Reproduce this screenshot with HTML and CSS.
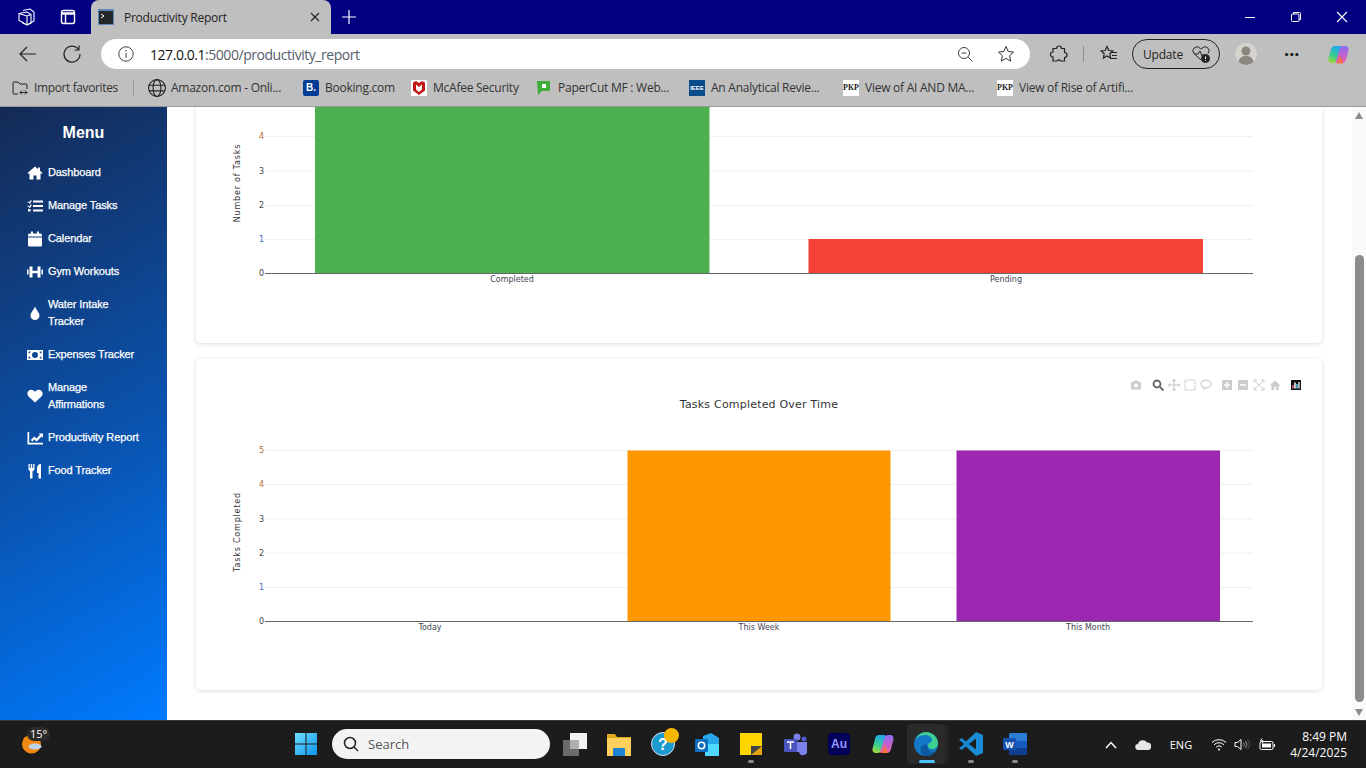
FILE: index.html
```html
<!DOCTYPE html>
<html lang="en">
<head>
  <meta charset="UTF-8">
  <meta name="viewport" content="width=device-width, initial-scale=1.0">
  <title>Productivity Report</title>
  <link rel="stylesheet" href="styles.css">
</head>
<body>
  <!-- browser tab strip -->
  <div class="tabstrip">
    <div class="strip-btns">
      <svg class="ico20" viewBox="0 0 20 20" fill="none" stroke="#fff" stroke-width="1.1"><path d="M7 3.5 14 2l4 3v9l-7 4-5-2.5"/><path d="M3 6.5 11 5l4 2.6v8.6L11 18 3 13.5z"/><path d="M11 9v9M3 6.5 11 9l4-1.4"/></svg>
      <svg class="ico20" viewBox="0 0 20 20" fill="none" stroke="#fff" stroke-width="1.4"><rect x="3.5" y="3.5" width="13" height="13" rx="2"/><path d="M3.5 6.5h13" stroke-width="2.5"/><path d="M7.5 6.5v10"/></svg>
    </div>
    <div class="tab">
      <svg class="tab-ico" viewBox="0 0 16 16"><rect width="16" height="16" fill="#5d89b8"/><rect x="1" y="2" width="14" height="13" fill="#23262b"/><path d="M3 5l3 2-3 2" fill="none" stroke="#fff" stroke-width="1"/></svg>
      <span class="tab-title">Productivity Report</span>
      <svg class="tab-close" viewBox="0 0 10 10" stroke="#222" stroke-width="1.1"><path d="M1 1l8 8M9 1l-8 8"/></svg>
    </div>
    <svg class="tab-plus" viewBox="0 0 14 14" stroke="#fff" stroke-width="1.2"><path d="M7 0v14M0 7h14"/></svg>
    <div class="win-btns">
      <svg class="win-ico" viewBox="0 0 12 12" stroke="#fff" fill="none"><path d="M1 6.5h10"/></svg>
      <svg class="win-ico" viewBox="0 0 12 12" stroke="#fff" fill="none"><rect x="1.5" y="3" width="7.5" height="7.5" rx="1"/><path d="M3.5 3V1.5h6a1 1 0 0 1 1 1v6H9"/></svg>
      <svg class="win-ico" viewBox="0 0 12 12" stroke="#fff" fill="none" stroke-width="1.1"><path d="M1 1l10 10M11 1 1 11"/></svg>
    </div>
  </div>

  <!-- address bar row -->
  <div class="toolbar">
    <svg class="ico22 back" viewBox="0 0 22 22" fill="none" stroke="#222" stroke-width="1.2"><path d="M19 11H3M10 4l-7 7 7 7"/></svg>
    <svg class="ico22 reload" viewBox="0 0 22 22" fill="none" stroke="#222" stroke-width="1.2"><path d="M17.5 6.5A8 8 0 1 0 19 11"/><path d="M18 2.5V7h-4.5"/></svg>
    <div class="address">
      <svg class="info" viewBox="0 0 16 16" fill="none" stroke="#444"><circle cx="8" cy="8" r="7.2"/><path d="M8 7v5M8 4v1.6"/></svg>
      <span class="url"><b>127.0.0.1</b>:5000/productivity_report</span>
      <svg class="addr-ico zoomout" viewBox="0 0 16 16" fill="none" stroke="#444"><circle cx="7" cy="7" r="5.5"/><path d="M4.500 7h5M11 11l4.500 4.500"/></svg>
      <svg class="addr-ico star" viewBox="0 0 18 18" fill="none" stroke="#333"><path d="M9 1.500l2.300 5 5.200.6-3.900 3.600 1.100 5.400L9 13.400l-4.700 2.700 1.100-5.400-3.900-3.600 5.200-.6z"/></svg>
    </div>
    <svg class="ico20 ext" viewBox="0 0 20 20" fill="none" stroke="#222" stroke-width="1.2"><path d="M7.500 4.500a2.500 2.500 0 0 1 5 0h3v4a2.500 2.500 0 0 1 0 5V17h-4a2 2 0 0 0-3.500 0h-4v-4a2.500 2.500 0 0 1 0-5V4.500z"/></svg>
    <span class="tool-sep"></span>
    <svg class="ico20 favs" viewBox="0 0 20 20" fill="none" stroke="#222" stroke-width="1.2"><path d="M8 2.500l1.800 4 4 .5-3 2.800.8 4.200L8 11.900 4.400 14l.8-4.200-3-2.800 4-.5zM13 8.500h5M13 11.500h5M12 14.500h6"/></svg>
    <div class="update">
      <span>Update</span>
      <svg class="update-ico" viewBox="0 0 20 20" fill="none" stroke="#222"><path d="M10 16 3 9.500a4 4 0 0 1 6-5.300l1 1 1-1a4 4 0 0 1 6 5.300"/><path d="M3 10h4l2-3 2 5 1.500-2"/><circle cx="14.500" cy="14.500" r="4" fill="#222"/><path d="M14.500 12.500V15M14.500 16v.8" stroke="#fff"/></svg>
    </div>
    <svg class="avatar" viewBox="0 0 22 22"><circle cx="11" cy="11" r="11" fill="#d6d3cf"/><circle cx="11" cy="8" r="4.500" fill="#8a8680"/><path d="M3.500 19c1-5 4-6 7.500-6s6.500 1 7.500 6a11 11 0 0 1-15 0z" fill="#8a8680"/></svg>
    <span class="dots">···</span>
    <svg class="copilot" viewBox="0 0 24 24">
      <defs>
        <linearGradient id="cpa" x1="0.6" y1="0" x2="0.3" y2="1"><stop offset="0" stop-color="#19a8f0"/><stop offset="0.6" stop-color="#3ccf8a"/><stop offset="1" stop-color="#a6d838"/></linearGradient>
        <linearGradient id="cpb" x1="0.5" y1="0" x2="0.5" y2="1"><stop offset="0" stop-color="#8a6cf5"/><stop offset="1" stop-color="#f25ca8"/></linearGradient>
      </defs>
      <path d="M8 3h5c1 0 2 .5 1.800 1.500L11 17c-.6 2.500-2 4-4.500 4H5c-2.500 0-4-2-3.400-4.500L4 7C4.600 4.500 6 3 8 3z" fill="url(#cpa)"/>
      <path d="M16 21h-5c-1 0-2-.5-1.800-1.500L13 7c.6-2.500 2-4 4.500-4H19c2.500 0 4 2 3.400 4.500L20 17c-.6 2.500-2 4-4 4z" fill="url(#cpb)"/>
      <path d="M9 21c2 0 3-2 3.500-4l1-4 3.500 8z" fill="#f8703c"/>
    </svg>
  </div>

  <!-- favorites bar -->
  <div class="favbar">
    <div class="fav">
      <svg class="fav-ico" viewBox="0 0 16 16" fill="none" stroke="#222"><path d="M6 14H2a1 1 0 0 1-1-1V3a1 1 0 0 1 1-1h4l2 2h6a1 1 0 0 1 1 1v4M8 12.500h7M10 10.500l-2 2 2 2M13 10.500l2 2-2 2"/></svg>
      <span class="fav-import">Import favorites</span>
    </div>
    <span class="fav-sep"></span>
    <div class="fav">
      <svg class="fav-ico globe" viewBox="0 0 16 16" fill="none" stroke="#222"><circle cx="8" cy="8" r="7.500"/><ellipse cx="8" cy="8" rx="3.500" ry="7.500"/><path d="M1 5.500h14M1 10.500h14"/></svg>
      <span>Amazon.com - Onli...</span>
    </div>
    <div class="fav">
      <span class="fav-ico booking">B.</span>
      <span>Booking.com</span>
    </div>
    <div class="fav">
      <svg class="fav-ico" viewBox="0 0 16 16"><rect width="16" height="16" fill="#fff"/><path d="M2 2.500 5 1l3 2 3-2 3 1.500v8L8 15l-6-4.500z" fill="#c01818"/><path d="M5 4.500 8 7l3-2.500v5L8 12 5 9.500z" fill="#fff"/></svg>
      <span>McAfee Security</span>
    </div>
    <div class="fav">
      <svg class="fav-ico" viewBox="0 0 16 16"><path d="M1 1h13v10H6l-4 4z" fill="#3fae3a"/><rect x="6" y="4" width="4" height="4" fill="#fff"/></svg>
      <span>PaperCut MF : Web...</span>
    </div>
    <div class="fav">
      <span class="fav-ico ieee">IEEE</span>
      <span>An Analytical Revie...</span>
    </div>
    <div class="fav">
      <span class="fav-ico pkp">PKP</span>
      <span>View of AI AND MA...</span>
    </div>
    <div class="fav">
      <span class="fav-ico pkp">PKP</span>
      <span>View of Rise of Artifi...</span>
    </div>
  </div>

  <div class="app">
    <nav class="sidebar">
      <h2 class="menu-title">Menu</h2>
      <a class="nav-item">
        <svg class="nav-ico" viewBox="0 0 16 16"><path d="M8 1.500 .5 8l1 1.100 1-.8v6.200h4v-4h3v4h4V8.300l1 .8 1-1.100L13 5.800V2.500h-2v1.600z"/></svg>
        <span>Dashboard</span>
      </a>
      <a class="nav-item">
        <svg class="nav-ico" viewBox="0 0 16 16"><path d="M1 3.200l1 1L4 2l.8.7L3 5.800.3 4zM1 7.500l1 1 2-2.200.8.700L3 10 .3 8.300zM1 11h2.500v2.500H1zM6 2.500h10v2H6zM6 7h10v2H6zM6 11.500h10v2H6z"/></svg>
        <span>Manage Tasks</span>
      </a>
      <a class="nav-item">
        <svg class="nav-ico" viewBox="0 0 16 16"><path d="M4 .5h2v2h4v-2h2v2h1.500A1.500 1.500 0 0 1 15 4v1.500H1V4a1.500 1.500 0 0 1 1.500-1.500H4zM1 6.500h14V14a1.500 1.500 0 0 1-1.500 1.500h-11A1.500 1.500 0 0 1 1 14z"/></svg>
        <span>Calendar</span>
      </a>
      <a class="nav-item">
        <svg class="nav-ico" viewBox="0 0 16 16"><path d="M0 5.500h1.500v5H0zM2.500 2.500H5.500v11H2.500zM5.500 6.800h5v2.400h-5zM10.500 2.500h3v11h-3zM14.500 5.500H16v5h-1.500z"/></svg>
        <span>Gym Workouts</span>
      </a>
      <a class="nav-item">
        <svg class="nav-ico" viewBox="0 0 16 16"><path d="M8 1.500C7 4.500 3.500 7.500 3.500 10.500a4.500 4.500 0 0 0 9 0C12.500 7.500 9 4.500 8 1.500z"/></svg>
        <span>Water Intake Tracker</span>
      </a>
      <a class="nav-item">
        <svg class="nav-ico" viewBox="0 0 16 16"><path fill-rule="evenodd" d="M0 3h16v10H0zM8 5a3 3 0 1 0 0 6 3 3 0 0 0 0-6zM1.500 4.500v2a2 2 0 0 0 2-2zM12.500 4.500a2 2 0 0 0 2 2v-2zM1.500 9.500v2h2a2 2 0 0 0-2-2zM14.500 9.500a2 2 0 0 0-2 2h2z"/></svg>
        <span>Expenses Tracker</span>
      </a>
      <a class="nav-item">
        <svg class="nav-ico" viewBox="0 0 16 16"><path d="M8 14.500 1.500 8.500C-1 5.500 1 1.800 4.300 1.800 6 1.800 7.300 2.800 8 4c.7-1.200 2-2.200 3.700-2.200 3.300 0 5.300 3.700 2.800 6.700z"/></svg>
        <span>Manage Affirmations</span>
      </a>
      <a class="nav-item">
        <svg class="nav-ico" viewBox="0 0 16 16"><path d="M.5 2h1.700v10.800H16v1.700H.5zM4 9.800l3.200-3.400 2.300 2L13 4.800l-1.300-1.300H16v4.300l-1.400-1.400-5 5-2.300-2-2.200 2.300z"/></svg>
        <span>Productivity Report</span>
      </a>
      <a class="nav-item">
        <svg class="nav-ico" viewBox="0 0 16 16"><path d="M1.500 1h1.300v4h1V1h1.400v4h1V1h1.300v5.500L5.500 8.500v7H3v-7L1.500 6.500zM10 5.500C10 3 11.500 1 14 1v14.500h-2.500V10H10z"/></svg>
        <span>Food Tracker</span>
      </a>
    </nav>

    <main class="content">
      <section class="card card-top">
        <svg class="chart" viewBox="196 107 1126 236">
          <g class="grid">
            <path d="M265 136.500H1253M265 171H1253M265 205.500H1253M265 239.500H1253"/>
          </g>
          <rect x="315" y="100" width="394.500" height="173.500" fill="#4caf50"/>
          <rect x="808.500" y="239" width="394.500" height="34.500" fill="#f44336"/>
          <path class="axis" d="M265 273.500H1253"/>
          <g class="ytick">
            <text class="tick-warm" x="264" y="139">4</text>
            <text x="264" y="174">3</text>
            <text x="264" y="208">2</text>
            <text class="tick-cool" x="264" y="242">1</text>
            <text x="264" y="276">0</text>
          </g>
          <g class="xtick">
            <text x="512" y="282">Completed</text>
            <text x="1006" y="282">Pending</text>
          </g>
          <text class="ytitle" transform="translate(240 183) rotate(-90)">Number of Tasks</text>
        </svg>
      </section>
      <section class="card">
        <svg class="chart" viewBox="196 359 1126 331">
          <g class="grid">
            <path d="M265 450.500H1253M265 484.500H1253M265 519H1253M265 553H1253M265 587.500H1253"/>
          </g>
          <rect x="627.500" y="450.500" width="263" height="171" fill="#ff9800"/>
          <rect x="956.500" y="450.500" width="263.500" height="171" fill="#9c27b0"/>
          <path class="axis" d="M265 621.500H1253"/>
          <g class="ytick">
            <text class="tick-warm" x="264" y="453">5</text>
            <text class="tick-warm" x="264" y="487">4</text>
            <text x="264" y="522">3</text>
            <text x="264" y="556">2</text>
            <text class="tick-cool" x="264" y="590">1</text>
            <text x="264" y="624">0</text>
          </g>
          <g class="xtick">
            <text x="430" y="630">Today</text>
            <text x="759" y="630">This Week</text>
            <text x="1088" y="630">This Month</text>
          </g>
          <text class="ytitle" transform="translate(240 532) rotate(-90)">Tasks Completed</text>
          <text class="chart-title" x="759" y="408">Tasks Completed Over Time</text>
        </svg>
        <div class="modebar">
          <svg class="mode mode-gap" viewBox="0 0 12 12" fill="#ccc"><path d="M1 3h2.500l1-1.500h3l1 1.500H11v7.500H1z"/><circle cx="6" cy="6.500" r="2" fill="#fff"/></svg>
          <svg class="mode mode-on" viewBox="0 0 12 12" fill="none" stroke="#666" stroke-width="1.800"><circle cx="5" cy="5" r="3.500"/><path d="M8 8l3.500 3.500"/></svg>
          <svg class="mode" viewBox="0 0 12 12" fill="none" stroke="#ccc" stroke-width="1.200"><path d="M6 .5v11M.5 6h11M4.500 2 6 .5 7.500 2M4.500 10 6 11.500 7.500 10M2 4.500.5 6 2 7.500M10 4.500 11.500 6 10 7.500"/></svg>
          <svg class="mode" viewBox="0 0 12 12" fill="none" stroke="#bbb" stroke-dasharray="1.500 1"><rect x="1" y="1" width="10" height="10"/></svg>
          <svg class="mode mode-gap" viewBox="0 0 12 12" fill="none" stroke="#ccc" stroke-width="1.200"><ellipse cx="6" cy="5" rx="5" ry="3.800"/><path d="M3.500 8.500 4 11"/></svg>
          <svg class="mode" viewBox="0 0 12 12" fill="#ccc"><path fill-rule="evenodd" d="M1 1h10v10H1zM5.200 3v2.200H3v1.600h2.200V9h1.600V6.800H9V5.200H6.800V3z"/></svg>
          <svg class="mode" viewBox="0 0 12 12" fill="#ccc"><path fill-rule="evenodd" d="M1 1h10v10H1zM3 5.200v1.600h6V5.200z"/></svg>
          <svg class="mode" viewBox="0 0 12 12" fill="none" stroke="#ccc"><path d="M1 4V1h3M8 1h3v3M11 8v3H8M4 11H1V8M2 2l8 8M10 2l-8 8"/></svg>
          <svg class="mode mode-gap2" viewBox="0 0 12 12" fill="#ccc"><path d="M6 1.500.5 6.500h2V11H5V8h2v3h2.500V6.500h2z"/></svg>
          <svg class="mode" viewBox="0 0 12 12" stroke-width="1.500"><rect x="1" y="1" width="10" height="10" fill="#111"/><path d="M3 9.500V6" stroke="#ef5aa0"/><path d="M5 9.500V3.500" stroke="#fff"/><path d="M7 9.500V5" stroke="#5ac8ef"/><path d="M9 9.500V3" stroke="#ddd"/></svg>
        </div>
      </section>
    </main>

    <div class="scrollbar">
      <span class="arrow-up"></span>
      <span class="thumb"></span>
      <span class="arrow-down"></span>
    </div>
  </div>

  <!-- windows taskbar -->
  <footer class="taskbar">
    <div class="weather">
      <svg class="weather-ico" viewBox="0 0 24 24"><circle cx="9.500" cy="12" r="9.500" fill="#f08a14"/><ellipse cx="13" cy="14.500" rx="6.500" ry="3" fill="#bcd2ea"/></svg>
      <span class="temp">15°</span>
    </div>
    <div class="task-center">
      <svg class="winlogo" viewBox="0 0 22 22">
        <defs><linearGradient id="wl" x1="0" y1="0" x2="1" y2="1"><stop offset="0" stop-color="#6fe0fb"/><stop offset="1" stop-color="#0c94f0"/></linearGradient></defs>
        <path d="M0 0h10.500v10.500H0zM11.500 0H22v10.500H11.500zM0 11.500h10.500V22H0zM11.500 11.500H22V22H11.500z" fill="url(#wl)"/>
      </svg>
      <div class="search">
        <svg class="search-ico" viewBox="0 0 16 16" fill="none" stroke="#222" stroke-width="1.500"><circle cx="7" cy="7" r="5.500"/><path d="M11 11l4 4"/></svg>
        <span>Search</span>
      </div>
      <div class="task-icons">
        <span class="task-cell">
          <svg class="task-ico" viewBox="0 0 24 24"><rect x="0" y="8" width="16" height="16" fill="#6b6b6b"/><rect x="7" y="1" width="17" height="16" fill="#f2f2f2"/><rect x="7" y="8" width="9" height="9" fill="#b0b0b0"/></svg>
        </span>
        <span class="task-cell">
          <svg class="task-ico" viewBox="0 0 24 24"><path d="M0 2h8l2 3h14v19H0z" fill="#e0a81e"/><path d="M0 6h24v18H0z" fill="#fdd05c"/><path d="M7 16h10a1 1 0 0 1 1 1v7H6v-7a1 1 0 0 1 1-1z" fill="#1c82d4"/></svg>
        </span>
        <span class="task-cell">
          <svg class="task-ico" viewBox="0 0 24 24"><circle cx="12" cy="12" r="11.500" fill="#1b9ad0" stroke="#dde" stroke-width="1"/><text class="help-mark" x="12" y="18">?</text></svg>
          <span class="help-badge"></span>
        </span>
        <span class="task-cell">
          <svg class="task-ico" viewBox="0 0 24 24"><path d="M8 4l8-3 8 5v14H8z" fill="#28a8ea"/><path d="M10 12h14v12H10z" fill="#50d9ff"/><rect x="0" y="7" width="13" height="13" rx="1" fill="#0f6cbd"/><circle cx="6.500" cy="13.500" r="3.200" fill="none" stroke="#fff" stroke-width="1.500"/></svg>
        </span>
        <span class="task-cell task-open">
          <svg class="task-ico" viewBox="0 0 24 24"><path d="M1 1h22v15l-7 7H1z" fill="#ffd500"/><path d="M23 14v9H12v-1l7-8z" fill="#e2a510"/><path d="M12 23v-9h11z" fill="#444"/></svg>
        </span>
        <span class="task-cell">
          <svg class="task-ico" viewBox="0 0 24 24"><circle cx="14" cy="5" r="3.500" fill="#7b83eb"/><circle cx="21" cy="7" r="2.500" fill="#5059c9"/><path d="M12 10h12v8a4 4 0 0 1-8 2h-4z" fill="#7b83eb"/><rect x="1" y="7" width="13" height="13" rx="1" fill="#4b53bc"/><path d="M4 10h7M7.500 10v7" stroke="#fff" stroke-width="1.500"/></svg>
        </span>
        <span class="task-cell">
          <span class="au-ico">Au</span>
        </span>
        <span class="task-cell">
          <svg class="task-ico" viewBox="0 0 24 24"><path d="M8 3h5c1 0 2 .5 1.800 1.500L11 17c-.6 2.500-2 4-4.500 4H5c-2.500 0-4-2-3.400-4.500L4 7C4.600 4.500 6 3 8 3z" fill="url(#cpa)"/><path d="M16 21h-5c-1 0-2-.5-1.800-1.500L13 7c.6-2.500 2-4 4.500-4H19c2.500 0 4 2 3.400 4.500L20 17c-.6 2.500-2 4-4 4z" fill="url(#cpb)"/><path d="M9 21c2 0 3-2 3.500-4l1-4 3.500 8z" fill="#f8703c"/></svg>
        </span>
        <span class="task-cell task-active">
          <svg class="task-ico" viewBox="0 0 24 24"><circle cx="12" cy="12" r="12" fill="#1478c8"/><path d="M1 9C3 3 8 0 12 0c6 0 12 5 12 11 0 4-3 6-6 6-2 0-4-1-4-3 0-4 4-3 4-6 0-3-4-5-7-5C6 3 2 6 1 9z" fill="#3ecf8e"/><path d="M10 24c-3-2-4-6-3-9 1-2 4-3 6-2 1 6 4 8 9 6-3 4-8 6-12 5z" fill="#0c5ba0"/></svg>
          <span class="active-bar"></span>
        </span>
        <span class="task-cell task-open">
          <svg class="task-ico" viewBox="0 0 24 24"><path d="M17 0l7 3v18l-7 3L7 14.500 2.500 18 0 16.500 5 12 0 7.500 2.500 6 7 9.500z" fill="#1a8ad4"/><path d="M17 6.500 10 12l7 5.500z" fill="#1c1c1c"/></svg>
        </span>
        <span class="task-cell task-open">
          <svg class="task-ico" viewBox="0 0 24 24"><rect x="6" y="1" width="18" height="22" rx="1" fill="#2b7cd3"/><rect x="6" y="16" width="18" height="7" fill="#103f91"/><rect x="6" y="9" width="18" height="7" fill="#185abd"/><rect x="0" y="6" width="13" height="12" rx="1" fill="#1550b0"/><text class="word-mark" x="6.500" y="15.500">W</text></svg>
        </span>
      </div>
    </div>
    <div class="tray">
      <svg class="tray-ico chev" viewBox="0 0 12 8" fill="none" stroke="#fff" stroke-width="1.500"><path d="M1 7l5-5.500L11 7"/></svg>
      <svg class="tray-cloud" viewBox="0 0 16 10"><path d="M3.500 10a3 3 0 0 1-.5-6 5 5 0 0 1 9-1.500A3.500 3.500 0 0 1 13 10z" fill="#e6e6e6"/></svg>
      <span class="lang">ENG</span>
      <svg class="tray-wifi" viewBox="0 0 16 13" fill="none" stroke="#fff"><path d="M1 4.500a10 10 0 0 1 14 0M3 6.800a7 7 0 0 1 10 0M5.200 9a4 4 0 0 1 5.600 0"/><circle cx="8" cy="11.500" r="1" fill="#fff" stroke="none"/></svg>
      <svg class="tray-sound" viewBox="0 0 16 13" fill="none" stroke="#fff"><path d="M1 4.500h2.500L7 1.500v10L3.500 8.500H1z"/><path d="M9.500 4.500a3 3 0 0 1 0 4M11.500 3a5.500 5.500 0 0 1 0 7" stroke="#999"/><path d="M13.500 1.500a8 8 0 0 1 0 10" stroke="#555"/></svg>
      <svg class="tray-batt" viewBox="0 0 17 13" fill="none" stroke="#fff"><rect x="1" y="3.500" width="13" height="8" rx="1.500"/><path d="M15.500 6v3"/><rect x="3" y="5.500" width="9" height="4" fill="#fff" stroke="none"/><path d="M3 .5 1.500 3h3L3 5.500" stroke-width="1"/></svg>
      <div class="clock">
        <span>8:49 PM</span>
        <span>4/24/2025</span>
      </div>
    </div>
  </footer>
</body>
</html>
```

FILE: styles.css
```css
* {
  box-sizing: border-box;
}

html, body {
  margin: 0;
  height: 768px;
  overflow: hidden;
}

body {
  display: flex;
  flex-direction: column;
  font-family: "Open Sans", "Noto Sans", sans-serif;
  background-color: #fff;
}

svg {
  display: block;
  flex-shrink: 0;
}

.ico20 {
  width: 20px;
  height: 20px;
}

.ico22 {
  width: 22px;
  height: 22px;
}

/* tab strip */
.tabstrip {
  display: flex;
  align-items: center;
  height: 34px;
  background-color: #000080;
  flex-shrink: 0;
}

.strip-btns {
  display: flex;
  gap: 22px;
  width: 91px;
  padding-left: 16px;
}

.tab {
  display: flex;
  align-items: center;
  align-self: stretch;
  width: 240px;
  padding: 0 11px 0 7px;
  background-color: #bfbfbf;
  border-radius: 8px 8px 0 0;
  color: #222;
}

.tab-ico {
  width: 16px;
  height: 16px;
}

.tab-title {
  flex: 1;
  margin-left: 10px;
  font-size: 12px;
  letter-spacing: -0.25px;
}

.tab-close {
  width: 10px;
  height: 10px;
}

.tab-plus {
  width: 14px;
  height: 14px;
  margin-left: 11px;
}

.win-btns {
  display: flex;
  gap: 34px;
  margin-left: auto;
  padding-right: 18px;
}

.win-ico {
  width: 12px;
  height: 12px;
}

/* address bar */
.toolbar {
  display: flex;
  align-items: center;
  height: 37px;
  padding: 5px 0 2px 17px;
  background-color: #bfbfbf;
  flex-shrink: 0;
}

.reload {
  margin-left: 22px;
}

.address {
  display: flex;
  align-items: center;
  width: 929px;
  height: 30px;
  margin-left: 18px;
  padding-left: 17px;
  background-color: #fff;
  border-radius: 15px;
}

.info {
  width: 16px;
  height: 16px;
}

.url {
  flex: 1;
  margin-left: 16px;
  font-size: 14px;
  letter-spacing: -0.45px;
  color: #55606c;
}

.url b {
  font-weight: normal;
  color: #111;
}

.addr-ico {
  width: 16px;
  height: 16px;
}

.star {
  width: 18px;
  height: 18px;
  margin: 0 15px 0 24px;
}

.ext {
  margin-left: 19px;
}

.tool-sep {
  width: 1px;
  height: 16px;
  margin: 0 15px 0 14px;
  background-color: #8f8f8f;
}

.update {
  display: flex;
  align-items: center;
  justify-content: space-between;
  width: 88px;
  height: 30px;
  margin-left: 13px;
  padding: 0 8px 0 10px;
  border: 1px solid #222;
  border-radius: 15px;
  font-size: 12px;
  letter-spacing: -0.2px;
  color: #222;
}

.update-ico {
  width: 20px;
  height: 20px;
}

.avatar {
  width: 22px;
  height: 22px;
  margin-left: 15px;
}

.dots {
  width: 14px;
  margin-left: 27px;
  font-size: 18px;
  line-height: 1;
  font-weight: bold;
  color: #222;
}

.copilot {
  width: 23px;
  height: 23px;
  margin-left: 29px;
}

/* favorites */
.favbar {
  display: grid;
  grid-template-columns: 121px 15px 155px 108px 125px 153px 154px 154px auto;
  align-items: center;
  height: 36px;
  padding: 0 0 2px 12px;
  background-color: #bfbfbf;
  border-bottom: 1px solid #9a9a9a;
  font-size: 12px;
  letter-spacing: -0.25px;
  color: #333;
  flex-shrink: 0;
}

.fav {
  display: flex;
  align-items: center;
  gap: 6px;
  white-space: nowrap;
}

.fav-import {
  letter-spacing: -0.38px;
}

.fav-ico {
  display: block;
  width: 16px;
  height: 16px;
  flex-shrink: 0;
  letter-spacing: 0;
}

.globe {
  width: 18px;
  height: 18px;
  margin-right: -1px;
}

.fav-sep {
  width: 1px;
  height: 16px;
  background-color: #9a9a9a;
}

.booking {
  background-color: #003b95;
  border-radius: 2px;
  color: #fff;
  font: bold 10px/16px "Liberation Sans", sans-serif;
  text-align: center;
}

.ieee {
  background-color: #0a4b8c;
  color: #fff;
  font: bold 6px/16px "Liberation Sans", sans-serif;
  text-align: center;
  overflow: hidden;
}

.pkp {
  background-color: #fff;
  color: #222;
  font: bold 8px/16px "Liberation Serif", serif;
  text-align: center;
  overflow: hidden;
}

/* page */
.app {
  display: flex;
  flex: 1;
  min-height: 0;
}

.sidebar {
  width: 167px;
  flex-shrink: 0;
  padding-top: 16px;
  background: linear-gradient(150deg, #152a55 0%, #0a52ad 55%, #007bff 100%);
  color: #fff;
}

.menu-title {
  margin: 0 0 13px;
  font: bold 16px/20px "Liberation Sans", Arial, sans-serif;
  text-align: center;
}

.nav-item {
  display: flex;
  align-items: center;
  gap: 5px;
  width: 143px;
  padding: 8px 0 8px 27px;
  font: 11px/17px "Liberation Sans", Arial, sans-serif;
  letter-spacing: -0.12px;
  -webkit-text-stroke: 0.25px #fff;
}

.nav-ico {
  width: 16px;
  height: 16px;
  fill: #fff;
}

.content {
  flex: 1;
  min-width: 0;
  padding: 0 30px 0 29px;
  overflow: hidden;
}

.card {
  position: relative;
  height: 331px;
  margin-bottom: 16px;
  background-color: #fff;
  border-radius: 5px;
  box-shadow: 0 1px 5px rgba(0, 0, 0, 0.14);
}

.card-top {
  height: 236px;
  border-radius: 0 0 5px 5px;
}

.chart {
  width: 100%;
  height: 100%;
}

.grid path {
  stroke: #f0f0f0;
  fill: none;
}

.axis {
  stroke: #666;
  fill: none;
}

.ytick text {
  font: 8px "DejaVu Sans", sans-serif;
  fill: #444;
  text-anchor: end;
}

.ytick .tick-warm {
  fill: #b4702c;
}

.ytick .tick-cool {
  fill: #3a6ab8;
}

.xtick text {
  font: 8px "DejaVu Sans", sans-serif;
  fill: #445;
  text-anchor: middle;
}

.ytitle {
  font: 8px "DejaVu Sans", sans-serif;
  letter-spacing: 0.8px;
  fill: #333;
  text-anchor: middle;
}

.chart-title {
  font: 11px "DejaVu Sans", sans-serif;
  letter-spacing: 0.2px;
  fill: #333;
  text-anchor: middle;
}

/* plotly mode bar, floats over the chart */
.modebar {
  position: absolute;
  top: 20px;
  right: 20px;
  display: flex;
  gap: 4px;
}

.mode {
  width: 12px;
  height: 12px;
}

.mode-on {
  margin-left: 1px;
}

.mode-gap {
  margin-right: 5px;
}

.mode-gap2 {
  margin-right: 5px;
}

/* scrollbar */
.scrollbar {
  display: flex;
  flex-direction: column;
  align-items: center;
  width: 14px;
  flex-shrink: 0;
  background-color: #fafafa;
}

.arrow-up {
  margin-top: 5px;
  border: 4.5px solid transparent;
  border-top: 0;
  border-bottom: 7px solid #8b8b8b;
}

.thumb {
  width: 9px;
  height: 447px;
  margin-top: 136px;
  background-color: #8b8b8b;
  border-radius: 4.5px;
}

.arrow-down {
  margin-top: 7px;
  border: 4.5px solid transparent;
  border-bottom: 0;
  border-top: 7px solid #8b8b8b;
}

/* taskbar */
.taskbar {
  position: relative;
  display: flex;
  align-items: center;
  height: 48px;
  padding: 0 0 1px 22px;
  background-color: #1c1c1c;
  border-top: 1px solid #3a3a3a;
  color: #fff;
  flex-shrink: 0;
}

.weather {
  position: relative;
  width: 24px;
  height: 24px;
}

.weather-ico {
  width: 24px;
  height: 24px;
}

.temp {
  position: absolute;
  top: -5px;
  left: 5px;
  padding: 0 3px;
  background-color: #2b2b2b;
  border-radius: 7px;
  font-size: 11px;
  line-height: 14px;
}

.task-center {
  display: flex;
  align-items: center;
  margin-left: 249px;
}

.winlogo {
  width: 22px;
  height: 22px;
}

.search {
  display: flex;
  align-items: center;
  width: 218px;
  height: 30px;
  margin-left: 15px;
  padding-left: 11px;
  background-color: #f3f3f3;
  border-radius: 15px;
  color: #555;
  font-size: 13px;
}

.search-ico {
  width: 16px;
  height: 16px;
  margin-right: 9px;
}

.task-icons {
  display: flex;
  align-items: center;
  margin-left: 3px;
}

.task-cell {
  position: relative;
  display: flex;
  align-items: center;
  justify-content: center;
  width: 44px;
  height: 40px;
}

.task-ico {
  width: 24px;
  height: 24px;
}

.task-open::after {
  content: "";
  position: absolute;
  bottom: 1px;
  left: 19px;
  width: 6px;
  height: 3px;
  border-radius: 2px;
  background-color: #8a8a8a;
}

.task-active {
  width: 38px;
  margin: 0 4px 0 2px;
  background-color: #2a2a2a;
  border-radius: 4px;
  box-shadow: 3px 0 0 #262626;
}

.active-bar {
  position: absolute;
  bottom: 1px;
  left: 12px;
  width: 16px;
  height: 3px;
  border-radius: 2px;
  background-color: #4cc2ff;
}

.help-badge {
  position: absolute;
  top: 4px;
  right: 6px;
  width: 15px;
  height: 15px;
  border-radius: 50%;
  background-color: #f8b800;
}

.help-mark {
  font: bold 16px "Liberation Sans", sans-serif;
  fill: #fff;
  text-anchor: middle;
}

.word-mark {
  font: bold 9px "Liberation Sans", sans-serif;
  fill: #fff;
  text-anchor: middle;
}

.au-ico {
  width: 22px;
  height: 22px;
  background-color: #00005b;
  border-radius: 4px;
  color: #9999ff;
  font: bold 12px/22px "Liberation Sans", sans-serif;
  text-align: center;
}

.tray {
  position: absolute;
  top: 0;
  right: 19px;
  bottom: 0;
  display: flex;
  align-items: center;
}

.chev {
  width: 12px;
  height: 8px;
}

.tray-cloud {
  width: 16px;
  height: 10px;
  margin-left: 18px;
}

.lang {
  margin-left: 19px;
  font-size: 11px;
}

.tray-wifi {
  width: 16px;
  height: 13px;
  margin-left: 19px;
}

.tray-sound {
  width: 16px;
  height: 13px;
  margin-left: 7px;
}

.tray-batt {
  width: 17px;
  height: 13px;
  margin-left: 9px;
}

.clock {
  display: flex;
  flex-direction: column;
  align-items: flex-end;
  margin-left: 14px;
  font-size: 12px;
  line-height: 16px;
}
```
